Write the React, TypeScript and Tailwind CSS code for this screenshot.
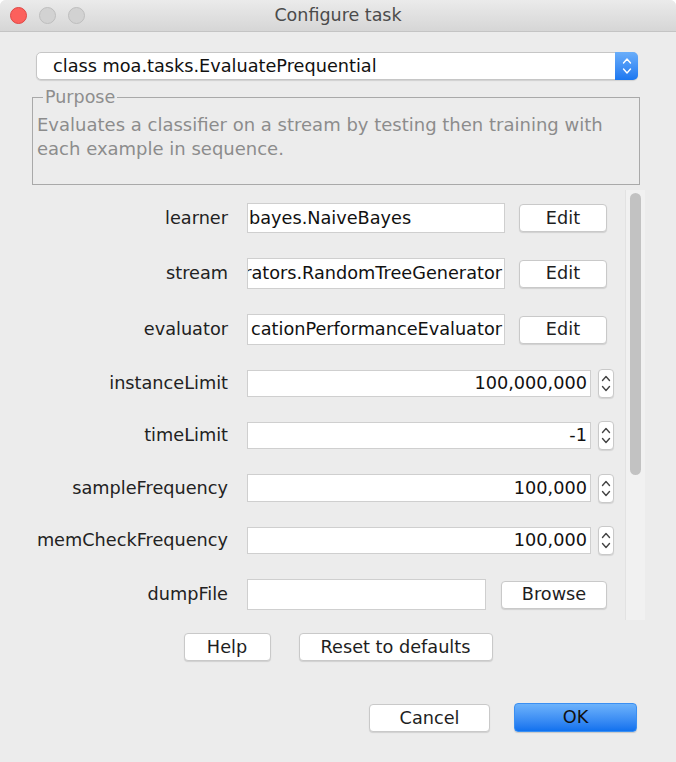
import React from "react";

function Chevrons({ color, w, h }: { color: string; w: number; h: number }) {
    const cx = w / 2;
    return (
        <svg width={w} height={h} viewBox={`0 0 ${w} ${h}`}>
            <path d={`M${cx - 3.5} ${h / 2 - 3} L${cx} ${h / 2 - 7} L${cx + 3.5} ${h / 2 - 3}`} fill="none" stroke={color} strokeWidth="1.4" strokeLinecap="round" strokeLinejoin="round" />
            <path d={`M${cx - 3.5} ${h / 2 + 3} L${cx} ${h / 2 + 7} L${cx + 3.5} ${h / 2 + 3}`} fill="none" stroke={color} strokeWidth="1.4" strokeLinecap="round" strokeLinejoin="round" />
        </svg>
    );
}

function MacButton({ children, className }: { children: React.ReactNode; className: string }) {
    return (
        <div className={"flex items-center justify-center bg-white border border-[#c9c9c9] rounded-[4px] shadow-[0_1px_1px_rgba(0,0,0,0.12)] text-[17.7px] text-[#1e1e1e] " + className}>
            {children}
        </div>
    );
}

function Row({ label, className, children }: { label: string; className: string; children: React.ReactNode }) {
    return (
        <div className={"flex items-center " + className}>
            <div className="w-[196px] text-right text-[17.7px] text-[#222]">{label}</div>
            <div className="ml-[19px] flex items-center">{children}</div>
        </div>
    );
}

function TextField({ value, className, right }: { value: string; className: string; right?: boolean }) {
    return (
        <div className={"flex items-center overflow-hidden whitespace-nowrap bg-white border border-[#cfcfcf] text-[17.7px] text-[#111] " + (right ? "justify-end pr-[3px] " : "pl-[1px] ") + className}>
            {value}
        </div>
    );
}

function Spinner() {
    return (
        <div className="ml-[7px] w-[16px] h-[29px] bg-white border border-[#c9c9c9] rounded-[4px] shadow-[0_1px_1px_rgba(0,0,0,0.1)] flex items-center justify-center">
            <Chevrons color="#444" w={14} h={27} />
        </div>
    );
}

export default function App() {
    return (
        <div className="w-[676px] h-[762px] bg-white font-['DejaVu_Sans',sans-serif]">
            <div className="w-[676px] h-[762px] bg-[#ececec] rounded-t-[6px] overflow-hidden flex flex-col">
                {/* title bar */}
                <div className="h-[32px] shrink-0 flex items-center relative bg-gradient-to-b from-[#ebebeb] to-[#d6d6d6] border-b border-[#c4c4c4]">
                    <div className="flex items-center gap-[12px] ml-[10px]">
                        <div className="w-[17px] h-[17px] rounded-full bg-[#fc605c] border border-[#df4744]" />
                        <div className="w-[17px] h-[17px] rounded-full bg-[#d2d2d2] border border-[#bebebe]" />
                        <div className="w-[17px] h-[17px] rounded-full bg-[#d2d2d2] border border-[#bebebe]" />
                    </div>
                    <div className="absolute inset-0 flex items-center justify-center text-[17.5px] text-[#4b4b4b]">Configure task</div>
                </div>

                {/* task combo */}
                <div className="mt-[20px] ml-[36px] w-[602px] h-[28px] shrink-0 flex bg-white border border-[#c6c6c6] rounded-[5px] shadow-[0_1px_1px_rgba(0,0,0,0.12)]">
                    <div className="flex-1 flex items-center pl-[16px] text-[17.7px] text-[#111]">class moa.tasks.EvaluatePrequential</div>
                    <div className="w-[23px] -my-px -mr-px rounded-r-[5px] bg-gradient-to-b from-[#6aaefa] to-[#1a77f0] flex items-center justify-center">
                        <Chevrons color="#fff" w={14} h={28} />
                    </div>
                </div>

                {/* purpose */}
                <fieldset className="mt-[8px] ml-[32px] w-[608px] h-[97px] shrink-0 border border-[#a9a9a9] px-[4px]">
                    <legend className="ml-[6px] px-[2px] text-[17.5px] leading-[18px] text-[#8e8e8e]">Purpose</legend>
                    <div className="text-[18px] leading-[24px] text-[#8c8c8c] mt-[7px]">
                        Evaluates a classifier on a stream by testing then training with each example in sequence.
                    </div>
                </fieldset>

                {/* options panel */}
                <div className="mt-[5px] ml-[32px] w-[613px] h-[430px] shrink-0 flex">
                    <div className="flex-1 flex flex-col gap-[25px] pt-[13px]">
                        <Row label="learner" className="h-[30px]">
                            <TextField value="bayes.NaiveBayes" className="w-[258px] h-[30px]" />
                            <MacButton className="ml-[14px] w-[88px] h-[28px]">Edit</MacButton>
                        </Row>
                        <Row label="stream" className="h-[31px]">
                            <TextField value="rators.RandomTreeGenerator" className="w-[258px] h-[31px] justify-end pr-[2px]" />
                            <MacButton className="ml-[14px] w-[88px] h-[28px]">Edit</MacButton>
                        </Row>
                        <Row label="evaluator" className="h-[31px]">
                            <TextField value="cationPerformanceEvaluator" className="w-[258px] h-[31px] justify-end pr-[2px]" />
                            <MacButton className="ml-[14px] w-[88px] h-[28px]">Edit</MacButton>
                        </Row>
                        <Row label="instanceLimit" className="h-[27px]">
                            <TextField value="100,000,000" right className="w-[344px] h-[27px]" />
                            <Spinner />
                        </Row>
                        <Row label="timeLimit" className="h-[27px]">
                            <TextField value="-1" right className="w-[344px] h-[27px]" />
                            <Spinner />
                        </Row>
                        <Row label="sampleFrequency" className="h-[28px]">
                            <TextField value="100,000" right className="w-[344px] h-[28px]" />
                            <Spinner />
                        </Row>
                        <Row label="memCheckFrequency" className="h-[27px]">
                            <TextField value="100,000" right className="w-[344px] h-[27px]" />
                            <Spinner />
                        </Row>
                        <Row label="dumpFile" className="h-[31px]">
                            <TextField value="" className="w-[239px] h-[31px]" />
                            <MacButton className="ml-[15px] w-[106px] h-[28px]">Browse</MacButton>
                        </Row>
                    </div>
                    <div className="w-[20px] bg-[#f1f1f1] border-l border-[#e2e2e2] pt-[3px] flex justify-center">
                        <div className="w-[11px] h-[282px] rounded-full bg-[#c2c2c2]" />
                    </div>
                </div>

                <div className="mt-[13px] flex justify-center gap-[28px]">
                    <MacButton className="w-[87px] h-[28px]">Help</MacButton>
                    <MacButton className="w-[194px] h-[28px]">Reset to defaults</MacButton>
                </div>

                <div className="mt-[43px] mr-[39px] flex justify-end gap-[24px]">
                    <MacButton className="w-[121px] h-[28px]">Cancel</MacButton>
                    <div className="w-[123px] h-[29px] -mt-px flex items-center justify-center rounded-[4px] bg-gradient-to-b from-[#6cb2fb] to-[#0f71ee] border border-[#3a8ff2] text-[17.7px] text-[#111] shadow-[0_1px_1px_rgba(0,0,0,0.15)]">
                        OK
                    </div>
                </div>
            </div>
        </div>
    );
}
